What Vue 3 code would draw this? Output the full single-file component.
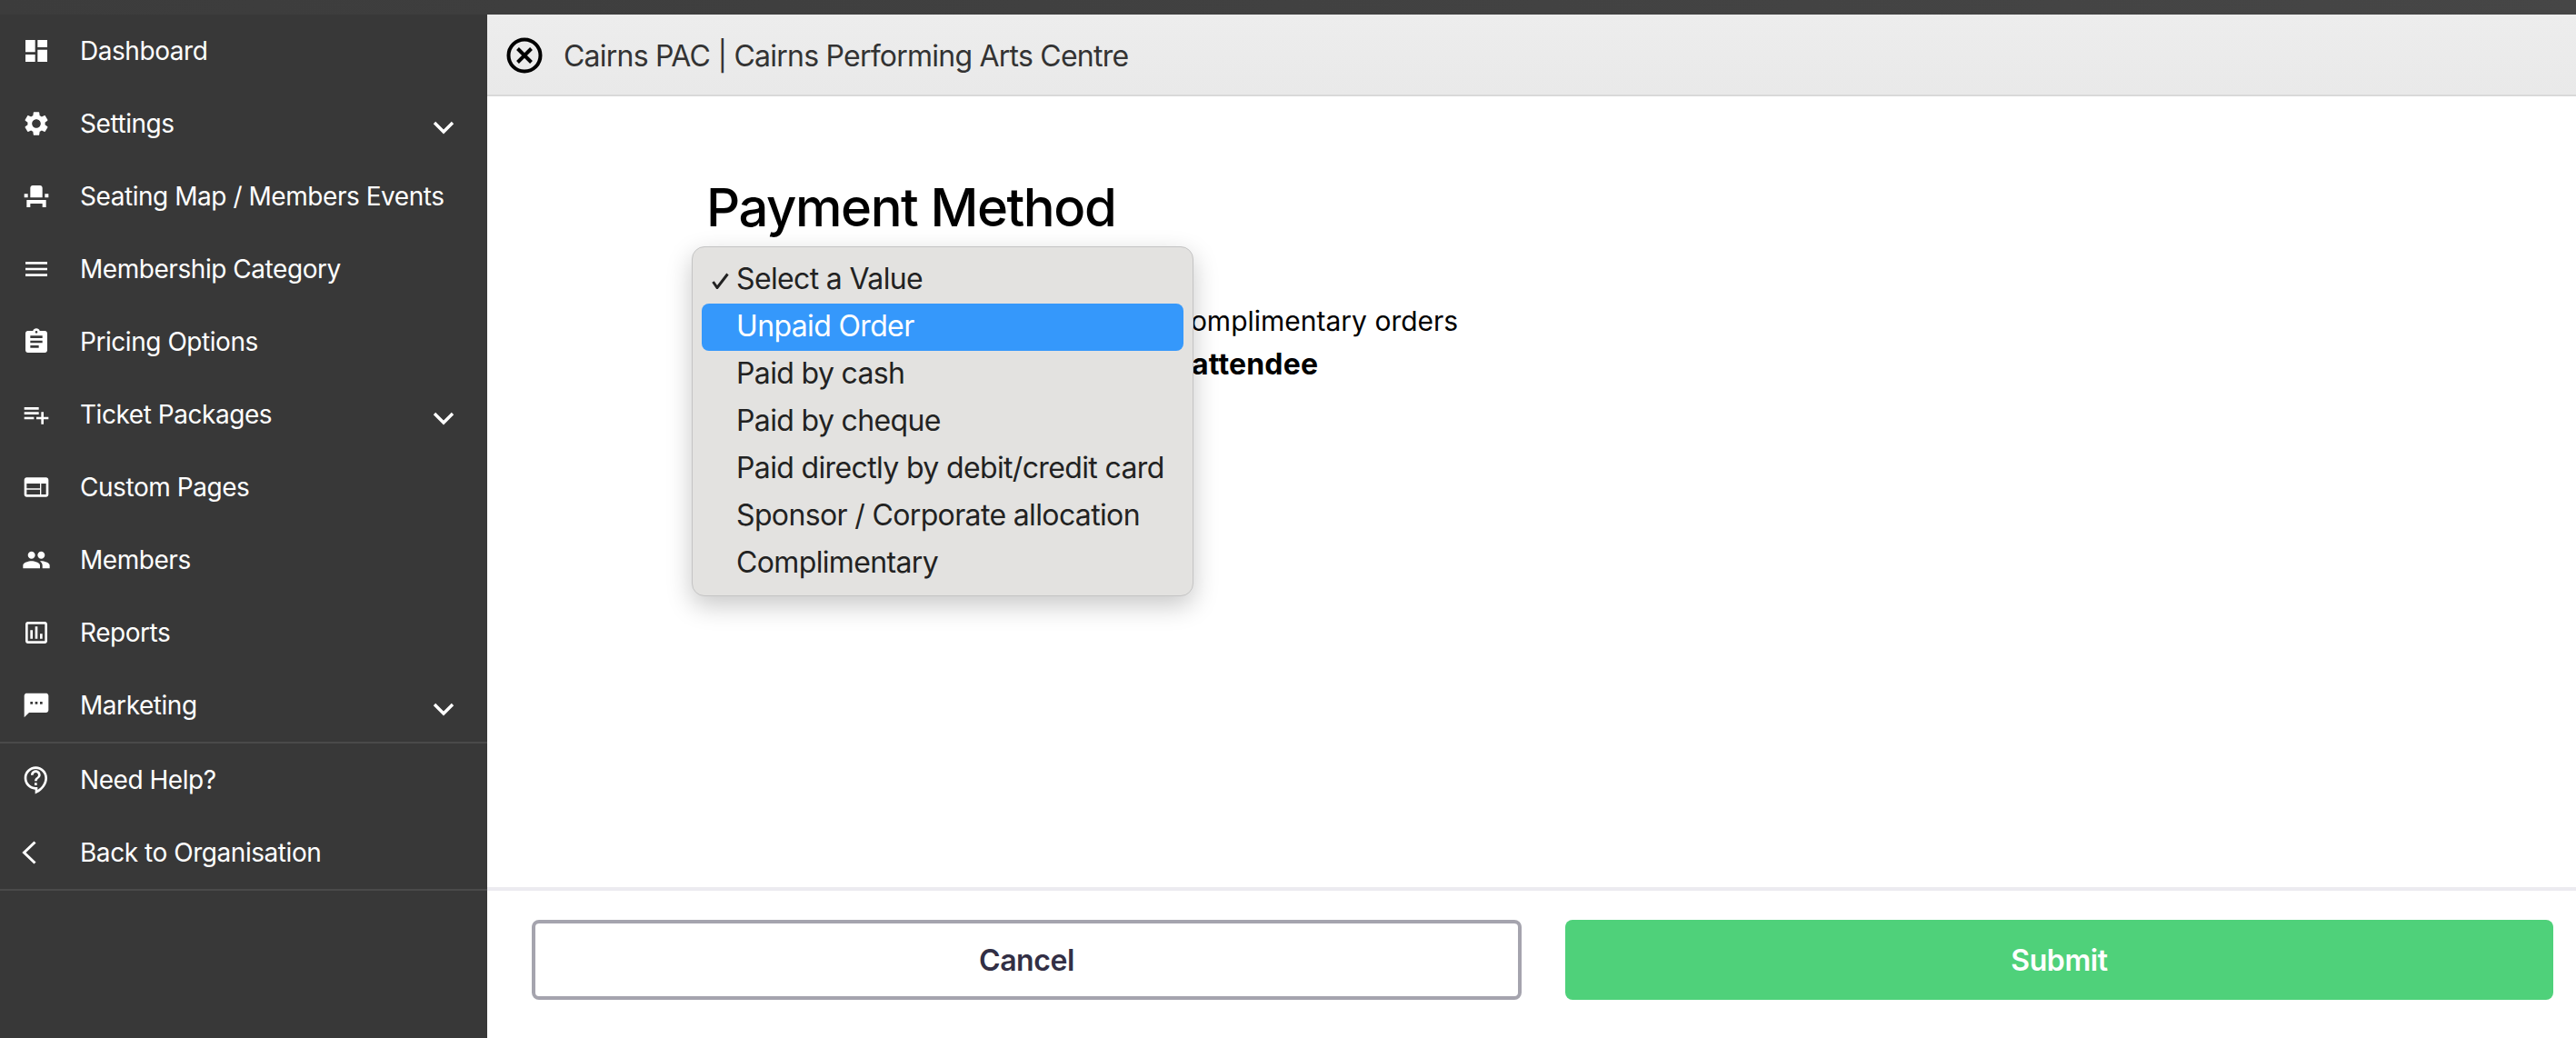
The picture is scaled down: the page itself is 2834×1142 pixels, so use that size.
<script setup>
const nav = [
  { label: 'Dashboard', d: 'M3 13h8V3H3v10zm0 8h8v-6H3v6zm10 0h8V11h-8v10zm0-18v6h8V3h-8z' },
  { label: 'Settings', more: true, d: 'M19.14 12.94c.04-.3.06-.61.06-.94 0-.32-.02-.64-.07-.94l2.03-1.58c.18-.14.23-.41.12-.61l-1.92-3.32c-.12-.22-.37-.29-.59-.22l-2.39.96c-.5-.38-1.03-.7-1.62-.94l-.36-2.54c-.04-.24-.24-.41-.48-.41h-3.84c-.24 0-.43.17-.47.41l-.36 2.54c-.59.24-1.13.57-1.62.94l-2.39-.96c-.22-.08-.47 0-.59.22L2.74 8.87c-.12.21-.08.47.12.61l2.03 1.58c-.05.3-.09.63-.09.94s.02.64.07.94l-2.03 1.58c-.18.14-.23.41-.12.61l1.92 3.32c.12.22.37.29.59.22l2.39-.96c.5.38 1.03.7 1.62.94l.36 2.54c.05.24.24.41.48.41h3.84c.24 0 .44-.17.47-.41l.36-2.54c.59-.24 1.13-.56 1.62-.94l2.39.96c.22.08.47 0 .59-.22l1.92-3.32c.12-.22.07-.47-.12-.61l-2.01-1.58zM12 15.6c-1.98 0-3.6-1.62-3.6-3.6s1.62-3.6 3.6-3.6 3.6 1.62 3.6 3.6-1.62 3.6-3.6 3.6z' },
  { label: 'Seating Map / Members Events', d: 'M4 18v3h3v-3h10v3h3v-6H4zm15-8h3v3h-3zM2 10h3v3H2zm15 3H7V5c0-1.1.9-2 2-2h6c1.1 0 2 .9 2 2v8z' },
  { label: 'Membership Category', d: 'M3 18h18v-2H3v2zm0-5h18v-2H3v2zm0-7v2h18V6H3z' },
  { label: 'Pricing Options', d: 'M19 3h-4.18C14.4 1.84 13.3 1 12 1c-1.3 0-2.4.84-2.82 2H5c-1.1 0-2 .9-2 2v14c0 1.1.9 2 2 2h14c1.1 0 2-.9 2-2V5c0-1.1-.9-2-2-2zm-7 0c.55 0 1 .45 1 1s-.45 1-1 1-1-.45-1-1 .45-1 1-1zm2 14H7v-2h7v2zm3-4H7v-2h10v2zm0-4H7V7h10v2z' },
  { label: 'Ticket Packages', more: true, d: 'M14 10H2v2h12v-2zm0-4H2v2h12V6zm4 8v-4h-2v4h-4v2h4v4h2v-4h4v-2h-4zM2 16h8v-2H2v2z' },
  { label: 'Custom Pages', d: 'M20 4H4c-1.1 0-1.99.9-1.99 2L2 18c0 1.1.9 2 2 2h16c1.1 0 2-.9 2-2V6c0-1.1-.9-2-2-2zm-5 14H4v-4h11v4zm0-5H4V9h11v4zm5 5h-4V9h4v9z' },
  { label: 'Members', d: 'M16 11c1.66 0 2.99-1.34 2.99-3S17.66 5 16 5c-1.66 0-3 1.34-3 3s1.34 3 3 3zm-8 0c1.66 0 2.99-1.34 2.99-3S9.66 5 8 5C6.34 5 5 6.34 5 8s1.34 3 3 3zm0 2c-2.33 0-7 1.17-7 3.5V19h14v-2.5c0-2.33-4.67-3.5-7-3.5zm8 0c-.29 0-.62.02-.97.05 1.16.84 1.97 1.97 1.97 3.45V19h6v-2.5c0-2.33-4.67-3.5-7-3.5z' },
  { label: 'Reports', d: 'M19 3H5c-1.1 0-2 .9-2 2v14c0 1.1.9 2 2 2h14c1.1 0 2-.9 2-2V5c0-1.1-.9-2-2-2zm0 16H5V5h14v14zM7 10h2v7H7zm4-3h2v10h-2zm4 6h2v4h-2z' },
  { label: 'Marketing', more: true, d: 'M20 2H4c-1.1 0-1.99.9-1.99 2L2 22l4-4h14c1.1 0 2-.9 2-2V4c0-1.1-.9-2-2-2zM9 11H7V9h2v2zm4 0h-2V9h2v2zm4 0h-2V9h2v2z' },
]
const helpIcon = 'M11 23.59v-3.6c-5.01-.26-9-4.42-9-9.49C2 5.26 6.26 1 11.5 1S21 5.26 21 10.5c0 4.95-3.44 9.93-8.57 12.4l-1.43.69zM11.5 3C7.36 3 4 6.36 4 10.5S7.36 18 11.5 18H13v2.3c3.64-2.3 6-6.08 6-9.8C19 6.36 15.64 3 11.5 3zm-1 11.5h2v2h-2zm2-1.5h-2c0-3.25 3-3 3-5 0-1.1-.9-2-2-2s-2 .9-2 2h-2c0-2.21 1.79-4 4-4s4 1.79 4 4c0 2.5-3 2.75-3 5z'
const options = [
  'Select a Value',
  'Unpaid Order',
  'Paid by cash',
  'Paid by cheque',
  'Paid directly by debit/credit card',
  'Sponsor / Corporate allocation',
  'Complimentary',
]
</script>

<template>
  <div class="page">
    <div class="topbar"></div>
    <div class="shell">
      <aside class="sidebar">
        <a v-for="item in nav" :key="item.label" class="nav-row">
          <svg class="icon" viewBox="0 0 24 24"><path :d="item.d" /></svg>
          <span class="nav-label">{{ item.label }}</span>
          <svg v-if="item.more" class="chev" viewBox="0 0 24 16"><path d="M2 3l10 10L22 3" /></svg>
        </a>
        <div class="nav-group">
          <a class="nav-row">
            <svg class="icon" viewBox="0 0 24 24"><path :d="helpIcon" /></svg>
            <span class="nav-label">Need Help?</span>
          </a>
          <a class="nav-row">
            <svg class="back" viewBox="0 0 16 26"><path d="M14.5 1.5L2.5 13l12 11.5" /></svg>
            <span class="nav-label">Back to Organisation</span>
          </a>
        </div>
      </aside>
      <main class="main">
        <header class="header">
          <svg class="close" viewBox="0 0 40 40">
            <circle cx="20" cy="20" r="17.5" />
            <path d="M12.5 12.5l15 15M27.5 12.5l-15 15" />
          </svg>
          <span class="title">Cairns PAC | Cairns Performing Arts Centre</span>
        </header>
        <section class="content">
          <h1>Payment Method</h1>
          <div class="field">
            <p class="line">This is for recording sponsored and complimentary orders</p>
            <p class="line strong">No confirmation email sent to the attendee</p>
            <ul class="menu">
              <li v-for="(opt, i) in options" :key="opt" class="opt" :class="{ active: i === 1 }">
                <svg v-if="i === 0" class="tick" viewBox="0 0 19 18"><path d="M1.5 10l4.5 6.5L17.5 1.5" /></svg>
                {{ opt }}
              </li>
            </ul>
          </div>
        </section>
        <footer class="footer">
          <button class="btn cancel">Cancel</button>
          <button class="btn submit">Submit</button>
        </footer>
      </main>
    </div>
  </div>
</template>

<style scoped>
.page {
  height: 1142px;
  display: flex;
  flex-direction: column;
  font-family: Inter, "Liberation Sans", sans-serif;
  overflow: hidden;
}
.topbar {
  height: 16px;
  flex: none;
  background: linear-gradient(90deg, #3c3c3c, #464646);
}
.shell {
  flex: 1;
  display: flex;
  min-height: 0;
}
.sidebar {
  width: 536px;
  flex: none;
  background: #383838;
  color: #fff;
}
.nav-row {
  height: 80px;
  display: flex;
  align-items: center;
  padding-left: 24px;
  padding-right: 36px;
}
.nav-group {
  border-top: 2px solid #4a4a4a;
  border-bottom: 2px solid #4a4a4a;
}
.icon {
  width: 32px;
  height: 32px;
  flex: none;
  fill: #fff;
}
.back {
  width: 16px;
  height: 26px;
  margin-right: 16px;
  flex: none;
  fill: none;
  stroke: #fff;
  stroke-width: 3;
}
.nav-label {
  margin-left: 32px;
  font-size: 28px;
  line-height: 40px;
  letter-spacing: -0.45px;
  white-space: nowrap;
  flex: 1;
}
.chev {
  width: 24px;
  height: 16px;
  flex: none;
  margin-top: 8px;
  fill: none;
  stroke: #fff;
  stroke-width: 3.4;
}
.main {
  flex: 1;
  min-width: 0;
  display: flex;
  flex-direction: column;
  background: #fff;
}
.header {
  height: 90px;
  box-sizing: border-box;
  flex: none;
  display: flex;
  align-items: center;
  padding: 2px 0 0 21px;
  background: linear-gradient(180deg, #ededed, #e9e9e9);
  border-bottom: 2px solid #d9d9d9;
}
.close {
  width: 40px;
  height: 40px;
  flex: none;
  fill: none;
  stroke: #000;
  stroke-width: 4;
}
.title {
  margin-left: 23px;
  font-size: 32px;
  letter-spacing: -0.77px;
  color: #333;
}
.content {
  flex: 1;
  padding: 86px 0 0 244px;
  color: #000;
}
h1 {
  margin: 0 0 0 -3px;
  font-size: 58px;
  line-height: 72px;
  font-weight: 500;
  letter-spacing: -1.45px;
}
.field {
  position: relative;
  margin-top: 65px;
}
.line {
  margin: 0;
  font-size: 30px;
  line-height: 48px;
  white-space: nowrap;
}
.strong {
  font-size: 32px;
  font-weight: 700;
  letter-spacing: 0.17px;
}
.menu {
  position: absolute;
  left: -19px;
  top: -58px;
  width: 552px;
  height: 385px;
  box-sizing: border-box;
  margin: 0;
  padding: 10px;
  list-style: none;
  background: #e3e2e0;
  border: 1px solid #c4c4c4;
  border-radius: 14px;
  box-shadow: 0 10px 28px rgba(0, 0, 0, 0.22);
  color: #222;
  font-size: 32px;
  font-weight: 400;
  letter-spacing: -0.64px;
}
.opt {
  height: 52px;
  display: flex;
  align-items: center;
  border-radius: 8px;
  padding-left: 38px;
  padding-bottom: 4px;
  box-sizing: border-box;
  position: relative;
  white-space: nowrap;
}
.tick {
  position: absolute;
  left: 11px;
  top: 18px;
  width: 19px;
  height: 18px;
  fill: none;
  stroke: #222;
  stroke-width: 3;
}
.active {
  background: #3598fb;
  color: #fff;
}
.footer {
  height: 166px;
  box-sizing: border-box;
  flex: none;
  display: flex;
  gap: 48px;
  padding: 32px 25px 0 49px;
  border-top: 4px solid #ecebf0;
}
.btn {
  height: 88px;
  box-sizing: border-box;
  border-radius: 8px;
  font-family: Inter, "Liberation Sans", sans-serif;
  font-size: 32px;
  font-weight: 600;
  letter-spacing: -0.4px;
}
.cancel {
  flex: 1 1 1089px;
  background: #fff;
  border: 4px solid #a5a4ae;
  color: #322f45;
}
.submit {
  flex: 1 1 1087px;
  background: #4fd17a;
  border: none;
  color: #fff;
}
</style>

<style>
body {
  margin: 0;
}
</style>
